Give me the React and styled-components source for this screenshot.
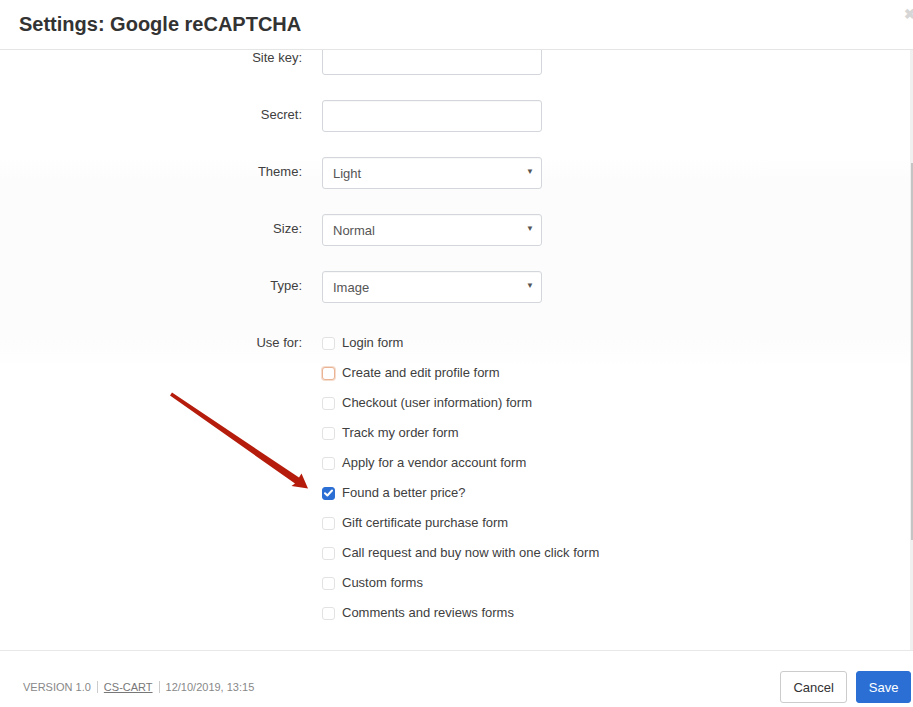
import React from 'react'
import styled, { createGlobalStyle } from 'styled-components'

const GlobalStyle = createGlobalStyle`
  html, body { margin: 0; padding: 0; background: #fff; }
  body { font-family: "Liberation Sans", Arial, sans-serif; color: #333; }
`

const Dialog = styled.div`
  position: relative;
  width: 913px;
  height: 707px;
  display: flex;
  flex-direction: column;
  overflow: hidden;
  background: #fff;
`

const Header = styled.div`
  height: 49px;
  flex: none;
  display: flex;
  align-items: center;
  padding-left: 19px;
  border-bottom: 1px solid #e5e5e5;
  position: relative;
`

const Title = styled.h3`
  margin: 0;
  font-size: 20px;
  font-weight: bold;
  color: #333;
`

const Close = styled.span`
  position: absolute;
  top: 6px;
  right: -3px;
  font-size: 14px;
  font-weight: bold;
  color: #d6d6d6;
`

const Body = styled.div`
  height: 600px;
  flex: none;
  display: flex;
  border-bottom: 1px solid #e8e8e8;
`

const Content = styled.div`
  flex: 1;
  overflow: hidden;
`

const Form = styled.div`
  margin-top: -7px;
  display: flex;
  flex-direction: column;
`

const Band = styled.div`
  display: flex;
  flex-direction: column;
  background: linear-gradient(#fff 0, #fcfcfc 24px, #fcfcfc 180px, #fff 212px);
`

const Row = styled.div`
  display: grid;
  grid-template-columns: 302px 1fr;
  column-gap: 20px;
  margin-bottom: ${p => p.$gap ?? 25}px;
`

const Label = styled.label`
  text-align: right;
  font-size: 13px;
  line-height: 18px;
  padding-top: 6px;
  color: #404040;
`

const Input = styled.div`
  width: 218px;
  height: 30px;
  border: 1px solid #d3d7db;
  border-radius: 3px;
  background: #fff;
  box-shadow: inset 0 1px 1px rgba(0,0,0,0.03);
`

const Select = styled(Input)`
  display: flex;
  align-items: center;
  justify-content: space-between;
  padding: 0 7px 0 10px;
  width: 201px;
  font-size: 13px;
  color: #555;
`

const Caret = styled.span`
  font-size: 8px;
  color: #555;
  margin-top: -3px;
`

const CheckList = styled.div`
  display: flex;
  flex-direction: column;
  margin-top: -1px;
`

const CheckItem = styled.label`
  height: 30px;
  display: flex;
  align-items: center;
  gap: 7px;
  font-size: 13px;
  color: #404040;
`

const Box = styled.span`
  width: 11px;
  height: 11px;
  border-radius: 3px;
  border: 1px solid ${p => (p.$checked ? '#2b6fd4' : p.$focus ? '#eab394' : '#e2e2e2')};
  background: ${p => (p.$checked ? '#2b6fd4' : '#fff')};
  box-shadow: ${p => (p.$focus ? '0 0 0 1px #f6dccd' : 'none')};
  display: flex;
  align-items: center;
  justify-content: center;
  margin-top: 2px;
`

const Track = styled.div`
  width: 3px;
  flex: none;
  background: #f0f0f0;
  display: flex;
  flex-direction: column;
  align-items: flex-end;
`

const Thumb = styled.div`
  width: 2px;
  height: 377px;
  margin-top: 113px;
  background: #c4c4c4;
`

const Footer = styled.div`
  flex: 1;
  display: flex;
  align-items: flex-start;
  justify-content: space-between;
  padding: 20px 2px 0 23px;
`

const Meta = styled.div`
  height: 32px;
  display: flex;
  align-items: center;
  font-size: 11px;
  color: #888;
`

const MetaPart = styled.span`
  padding: 0 6px;
  border-left: ${p => (p.$first ? 'none' : '1px solid #ccc')};
  padding-left: ${p => (p.$first ? 0 : 6)}px;
  line-height: 12px;
  color: ${p => (p.$link ? '#777' : '#888')};
  text-decoration: ${p => (p.$link ? 'underline' : 'none')};
`

const Buttons = styled.div`
  display: flex;
  gap: 9px;
`

const Button = styled.button`
  height: 32px;
  padding: 0 ${p => (p.$primary ? 11.5 : 12.5)}px;
  border-radius: 3px;
  font-family: "Liberation Sans", Arial, sans-serif;
  font-size: 13px;
  border: 1px solid ${p => (p.$primary ? '#2b6fd4' : '#ccc')};
  background: ${p => (p.$primary ? '#2b6fd4' : '#fff')};
  color: ${p => (p.$primary ? '#fff' : '#333')};
`

const Annotation = styled.svg`
  position: absolute;
  left: 0;
  top: 0;
  pointer-events: none;
`

const checks = [
  { label: 'Login form' },
  { label: 'Create and edit profile form', focus: true },
  { label: 'Checkout (user information) form' },
  { label: 'Track my order form' },
  { label: 'Apply for a vendor account form' },
  { label: 'Found a better price?', checked: true },
  { label: 'Gift certificate purchase form' },
  { label: 'Call request and buy now with one click form' },
  { label: 'Custom forms' },
  { label: 'Comments and reviews forms' },
]

function Check({ label, checked, focus }) {
  return (
    <CheckItem>
      <Box $checked={checked} $focus={focus}>
        {checked && (
          <svg width="9" height="8" viewBox="0 0 9 8">
            <path d="M1 4.2 L3.4 6.5 L8 1.5" fill="none" stroke="#fff" strokeWidth="2" strokeLinecap="round" strokeLinejoin="round" />
          </svg>
        )}
      </Box>
      {label}
    </CheckItem>
  )
}

export default function App() {
  return (
    <Dialog>
      <GlobalStyle />
      <Header>
        <Title>Settings: Google reCAPTCHA</Title>
        <Close>✖</Close>
      </Header>
      <Body>
        <Content>
          <Form>
            <Row>
              <Label>Site key:</Label>
              <Input />
            </Row>
            <Row>
              <Label>Secret:</Label>
              <Input />
            </Row>
            <Band>
              {[['Theme:', 'Light'], ['Size:', 'Normal'], ['Type:', 'Image']].map(([l, v]) => (
                <Row key={l}>
                  <Label>{l}</Label>
                  <Select>
                    {v}
                    <Caret>▼</Caret>
                  </Select>
                </Row>
              ))}
              <Row $gap={0}>
                <Label>Use for:</Label>
                <CheckList>
                  {checks.map(c => <Check key={c.label} {...c} />)}
                </CheckList>
              </Row>
            </Band>
          </Form>
        </Content>
        <Track>
          <Thumb />
        </Track>
      </Body>
      <Footer>
        <Meta>
          <MetaPart $first>VERSION 1.0</MetaPart>
          <MetaPart $link>CS-CART</MetaPart>
          <MetaPart>12/10/2019, 13:15</MetaPart>
        </Meta>
        <Buttons>
          <Button>Cancel</Button>
          <Button $primary>Save</Button>
        </Buttons>
      </Footer>
      <Annotation width="913" height="707" viewBox="0 0 913 707">
        <polygon
          points="170,395.5 172,392.5 299,477.5 301.5,473.5 308,488.5 291.5,486 295,483.5"
          fill="#b51c0b"
          strokeLinejoin="round"
        />
      </Annotation>
    </Dialog>
  )
}
